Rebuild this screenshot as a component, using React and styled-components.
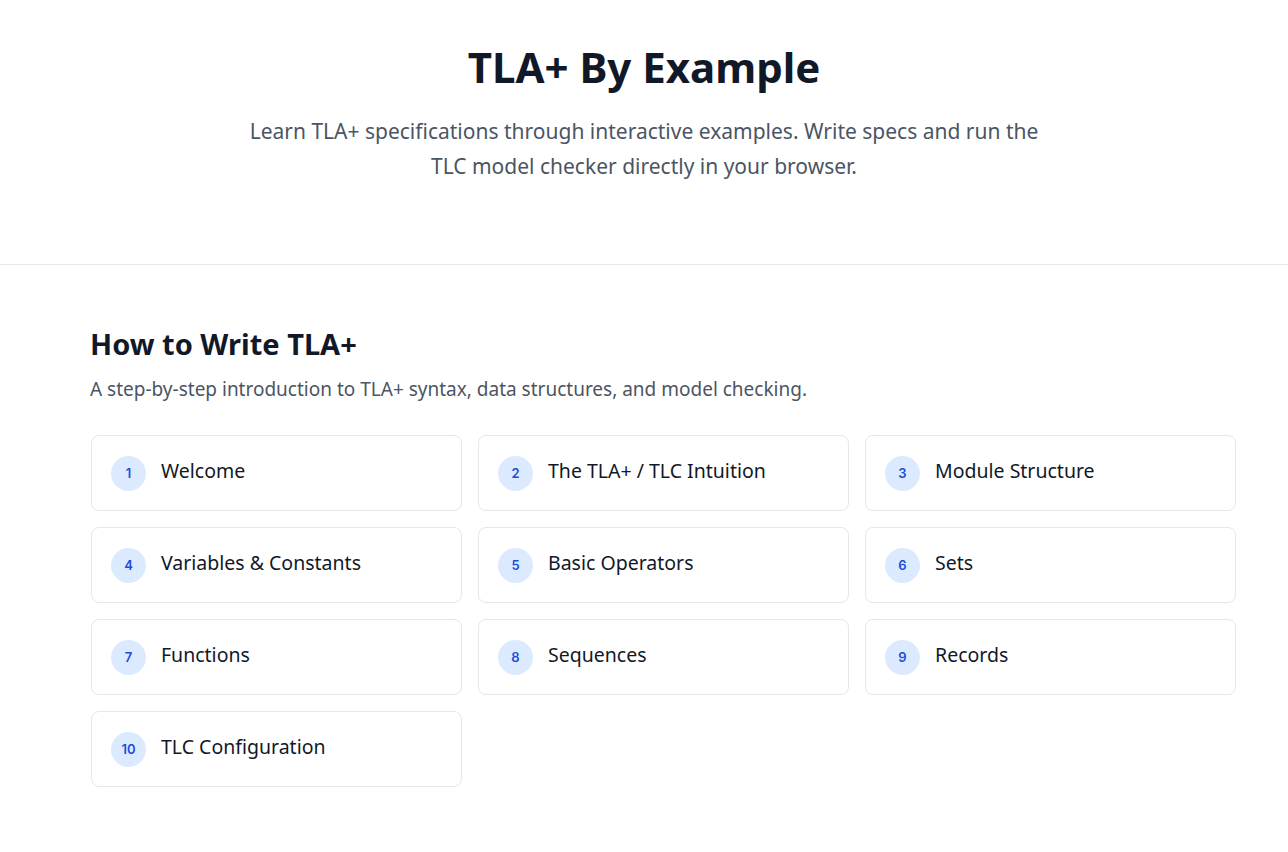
import styled, { createGlobalStyle } from "styled-components";

const GlobalStyle = createGlobalStyle`
  * { box-sizing: border-box; }
  body {
    margin: 0;
    background: #ffffff;
    font-family: "Noto Sans", "Open Sans", sans-serif;
    color: #111827;
  }
`;

const Hero = styled.header`
  padding: 42px 0 80px;
  text-align: center;
  border-bottom: 1px solid #e5e7eb;
`;

const Title = styled.h1`
  margin: 0;
  font-size: 42px;
  line-height: 50px;
  font-weight: 700;
  color: #111827;
`;

const Lead = styled.p`
  margin: 22px auto 0;
  max-width: 810px;
  font-size: 21px;
  line-height: 35px;
  color: #4b5563;
`;

const Section = styled.section`
  padding: 61px 52px 64px 90px;
`;

const SectionTitle = styled.h2`
  margin: 0;
  font-size: 29px;
  line-height: 36px;
  font-weight: 700;
  color: #111827;
`;

const SectionLead = styled.p`
  margin: 13px 0 0;
  font-size: 19px;
  line-height: 28px;
  color: #4b5563;
`;

const Grid = styled.div`
  margin-top: 32px;
  padding-left: 1px;
  display: grid;
  grid-template-columns: repeat(3, 1fr);
  gap: 16px;
`;

const Card = styled.a`
  display: flex;
  align-items: center;
  gap: 15px;
  padding: 19.5px 19px;
  border: 1px solid #e5e7eb;
  border-radius: 8px;
  background: #fff;
  text-decoration: none;
  color: #111827;
`;

const Badge = styled.span`
  flex: none;
  width: 35px;
  height: 35px;
  border-radius: 50%;
  background: #dbeafe;
  color: #1d4ed8;
  display: flex;
  align-items: center;
  justify-content: center;
  font-family: Inter, "Noto Sans", sans-serif;
  font-size: 13px;
  font-weight: 600;
`;

const CardLabel = styled.span`
  font-size: 19.5px;
  line-height: 28px;
  font-weight: 400;
  margin-top: -4px;
`;

const lessons = [
  "Welcome",
  "The TLA+ / TLC Intuition",
  "Module Structure",
  "Variables & Constants",
  "Basic Operators",
  "Sets",
  "Functions",
  "Sequences",
  "Records",
  "TLC Configuration",
];

export default function App() {
  return (
    <>
      <GlobalStyle />
      <Hero>
        <Title>TLA+ By Example</Title>
        <Lead>
          Learn TLA+ specifications through interactive examples. Write specs
          and run the TLC model checker directly in your browser.
        </Lead>
      </Hero>
      <Section>
        <SectionTitle>How to Write TLA+</SectionTitle>
        <SectionLead>
          A step-by-step introduction to TLA+ syntax, data structures, and
          model checking.
        </SectionLead>
        <Grid>
          {lessons.map((name, i) => (
            <Card key={name} href="#">
              <Badge>{i + 1}</Badge>
              <CardLabel>{name}</CardLabel>
            </Card>
          ))}
        </Grid>
      </Section>
    </>
  );
}
